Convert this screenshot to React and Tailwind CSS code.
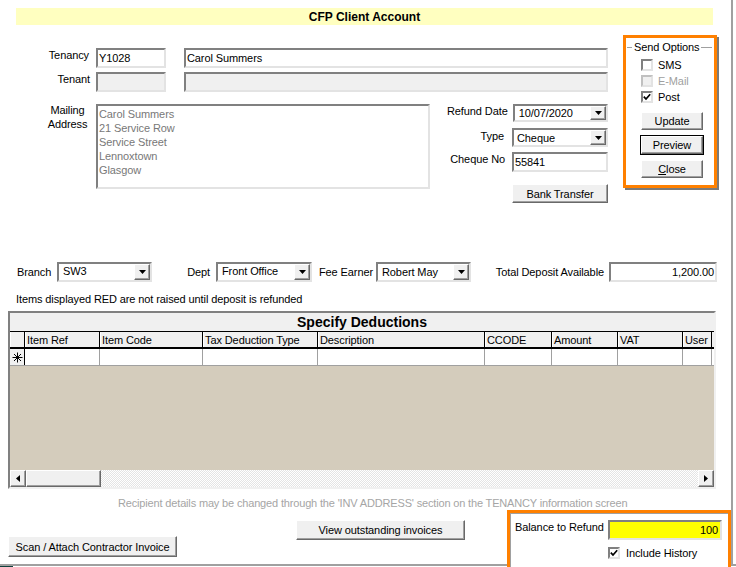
import React from "react";

const sunken =
  "border-2 border-t-[#808080] border-l-[#808080] border-r-[#e3e3e3] border-b-[#e3e3e3]";
const raised =
  "border border-t-white border-l-white border-r-[#696969] border-b-[#696969] shadow-[inset_-1px_-1px_0_#a0a0a0] bg-[#f0f0f0]";

function Field({ w, h = "h-[20px]", value = "", bg = "bg-white", right, className = "" }) {
  return (
    <div
      className={`${sunken} ${w} ${h} ${bg} flex items-center px-[1px] whitespace-nowrap ${
        right ? "justify-end" : ""
      } ${className}`}
    >
      {value}
    </div>
  );
}

function Arrow({ dir = "down" }) {
  if (dir === "left")
    return (
      <svg width="4" height="7" viewBox="0 0 4 7">
        <path d="M4 0 L0 3.5 L4 7 Z" fill="black" />
      </svg>
    );
  if (dir === "right")
    return (
      <svg width="4" height="7" viewBox="0 0 4 7">
        <path d="M0 0 L4 3.5 L0 7 Z" fill="black" />
      </svg>
    );
  return (
    <svg width="7" height="4" viewBox="0 0 7 4">
      <path d="M0 0 L7 0 L3.5 4 Z" fill="black" />
    </svg>
  );
}

function Combo({ w, h = "h-[20px]", value, pad = "pl-[3px]" }) {
  return (
    <div className={`${sunken} ${w} ${h} bg-white flex items-stretch`}>
      <div className={`flex-1 flex items-center ${pad} whitespace-nowrap`}>{value}</div>
      <div className={`${raised} w-[16px] flex items-center justify-center`}>
        <Arrow />
      </div>
    </div>
  );
}

function Btn({ w, h = "h-[18px]", children, strong, className = "" }) {
  return (
    <div
      className={`${w} ${h} ${raised} ${strong ? "outline outline-1 outline-black" : ""} flex items-center justify-center whitespace-nowrap ${className}`}
    >
      {children}
    </div>
  );
}

function Check({ checked, disabled }) {
  return (
    <div
      className={`w-[12px] h-[12px] ${sunken} ${disabled ? "bg-[#f0f0f0] border-t-[#c0c0c0] border-l-[#c0c0c0]" : "bg-white"} flex items-center justify-center`}
    >
      {checked && (
        <svg width="8" height="8" viewBox="0 0 8 8">
          <path d="M0.8 3.6 L3 6 L7.2 1.2" stroke="black" strokeWidth="1.7" fill="none" />
        </svg>
      )}
    </div>
  );
}

const columns = [
  { w: "w-[15px]", label: "" },
  { w: "w-[75px]", label: "Item Ref" },
  { w: "w-[103px]", label: "Item Code" },
  { w: "w-[115px]", label: "Tax Deduction Type" },
  { w: "w-[167px]", label: "Description" },
  { w: "w-[67px]", label: "CCODE" },
  { w: "w-[66px]", label: "Amount" },
  { w: "w-[65px]", label: "VAT" },
  { w: "w-[29px]", label: "User" },
];

const address = ["Carol Summers", "21 Service Row", "Service Street", "Lennoxtown", "Glasgow"];

export default function App() {
  return (
    <div className="w-[736px] h-[567px] overflow-hidden bg-white text-black text-[11px] tracking-[-0.1px] font-['Liberation_Sans',Arial,sans-serif] leading-[14px] flex flex-col">
      <div className="flex h-[564px] shrink-0">
        {/* main window */}
        <div className="w-[733px] border-r-2 border-[#a0a0a0] flex flex-col [&>*]:shrink-0">
          <div className="mt-[8px] ml-[16px] w-[697px] h-[17px] bg-[#ffffc0] flex items-center justify-center font-bold text-[12px] tracking-normal">
            CFP Client Account
          </div>

          {/* top section */}
          <div className="flex">
            <div className="w-[623px] flex flex-col">
              <div className="mt-[23px] flex items-center h-[20px]">
                <div className="w-[89px] text-right -mt-[6px]">Tenancy</div>
                <Field w="w-[70px]" value="Y1028" className="ml-[7px]" />
                <Field w="w-[424px]" value="Carol Summers" className="ml-[18px]" />
              </div>
              <div className="mt-[4px] flex items-center h-[20px]">
                <div className="w-[90px] text-right -mt-[6px]">Tenant</div>
                <Field w="w-[70px]" bg="bg-[#f0f0f0]" className="ml-[6px]" />
                <Field w="w-[424px]" bg="bg-[#f0f0f0]" className="ml-[18px]" />
              </div>
              <div className="mt-[12px] flex items-start">
                <div className="w-[46px]" />
                <div className="w-[43px] text-center -mt-[1px]">
                  Mailing
                  <br />
                  Address
                </div>
                <div className={`${sunken} ml-[7px] w-[334px] h-[85px] bg-white text-[#787878] pl-[1px] pt-[1px]`}>
                  {address.map((line) => (
                    <div key={line}>{line}</div>
                  ))}
                </div>
                <div className="ml-[17px] w-[161px] flex flex-col">
                  <div className="flex items-center h-[18px]">
                    <div className="flex-1 text-right pr-[5px] -mt-[4px] whitespace-nowrap">Refund Date</div>
                    <Combo w="w-[96px]" h="h-[18px]" value="10/07/2020" pad="pl-[4px]" />
                  </div>
                  <div className="mt-[6px] flex items-center h-[19px]">
                    <div className="flex-1 text-right pr-[8px] -mt-[4px]">Type</div>
                    <Combo w="w-[96px]" h="h-[19px]" value="Cheque" />
                  </div>
                  <div className="mt-[5px] flex items-center h-[20px]">
                    <div className="flex-1 text-right pr-[7px] -mt-[6px] whitespace-nowrap">Cheque No</div>
                    <Field w="w-[96px]" value="55841" />
                  </div>
                  <Btn w="w-[96px]" h="h-[19px]" className="mt-[12px] self-end">
                    Bank Transfer
                  </Btn>
                </div>
              </div>
            </div>

            {/* send options */}
            <div className="mt-[10px] w-[94px] h-[153px] border-[3px] border-[#ff8000] shadow-[2px_2px_0_#7a7a7a] flex flex-col">
              <div className="mt-[3px] h-[12px] flex items-center">
                <div className="w-[5px] ml-[1px] h-px bg-[#a0a0a0]" />
                <div className="px-[2px]">Send Options</div>
                <div className="flex-1 h-px bg-[#a0a0a0] mr-[2px]" />
              </div>
              <div className="mt-[6px] pl-[15px] flex flex-col gap-[4px]">
                <div className="flex items-center h-[12px]">
                  <Check />
                  <span className="ml-[5px]">SMS</span>
                </div>
                <div className="flex items-center h-[12px]">
                  <Check disabled />
                  <span className="ml-[5px] text-[#a0a0a0]">E-Mail</span>
                </div>
                <div className="flex items-center h-[12px]">
                  <Check checked />
                  <span className="ml-[5px]">Post</span>
                </div>
              </div>
              <div className="mt-[9px] pl-[15px] flex flex-col gap-[6px]">
                <Btn w="w-[62px]">Update</Btn>
                <Btn w="w-[62px]" strong>
                  Preview
                </Btn>
                <Btn w="w-[62px]">
                  <span className="underline">C</span>lose
                </Btn>
              </div>
            </div>
          </div>

          {/* branch row */}
          <div className="mt-[59px] flex items-center h-[20px]">
            <div className="w-[57px] pl-[17px]">Branch</div>
            <Combo w="w-[95px]" value="SW3" pad="pl-[4px] -mt-[3px]" />
            <div className="w-[64px] text-right pr-[6px]">Dept</div>
            <Combo w="w-[96px]" value="Front Office" pad="pl-[4px] -mt-[3px]" />
            <div className="w-[64px] text-right pr-[3px]">Fee Earner</div>
            <Combo w="w-[95px]" value="Robert May" pad="pl-[4px] -mt-[1px]" />
            <div className="w-[138px] text-right pr-[5px]">Total Deposit Available</div>
            <Field w="w-[108px]" value="1,200.00" right />
          </div>

          <div className="mt-[10px] pl-[16px]">Items displayed RED are not raised until deposit is refunded</div>

          {/* grid */}
          <div className="ml-[8px] mt-[5px] w-[708px] h-[178px] border-2 border-t-[#808080] border-l-[#808080] border-r-[#f0f0f0] border-b-[#f0f0f0] flex flex-col">
            <div className="h-[19px] bg-[#f0f0f0] border-b border-black flex items-center justify-center font-bold text-[14px] tracking-normal">
              Specify Deductions
            </div>
            <div className="h-[17px] flex border-b-2 border-black bg-[#f0f0f0]">
              {columns.map((c, i) => (
                <div
                  key={i}
                  className={`${c.w} border-r border-black border-l border-l-white pl-[1px] flex items-center whitespace-nowrap overflow-hidden`}
                >
                  {c.label}
                </div>
              ))}
            </div>
            <div className="h-[17px] flex bg-white border-b border-[#a0a0a0]">
              {columns.map((c, i) =>
                i === 0 ? (
                  <div key={i} className={`${c.w} bg-[#f0f0f0] border-r border-black flex items-center justify-center`}>
                    <svg width="11" height="11" viewBox="0 0 11 11">
                      <path d="M5.5 0.5 V10.5 M0.5 5.5 H10.5 M2 2 L9 9 M9 2 L2 9" stroke="black" strokeWidth="1" />
                    </svg>
                  </div>
                ) : (
                  <div key={i} className={`${c.w} border-r border-[#a0a0a0]`} />
                ),
              )}
            </div>
            <div className="flex-1 bg-[#d4ccbc]" />
            <div className="h-[17px] flex bg-[repeating-conic-gradient(#e4e4e4_0_25%,#ffffff_0_50%)] bg-[length:2px_2px]">
              <div className={`w-[16px] ${raised} flex items-center justify-center`}>
                <Arrow dir="left" />
              </div>
              <div className={`w-[75px] ${raised}`} />
              <div className="flex-1" />
              <div className={`w-[16px] ${raised} flex items-center justify-center`}>
                <Arrow dir="right" />
              </div>
            </div>
          </div>

          <div className="mt-[7px] pl-[118px] whitespace-nowrap text-[#a5a5a5] tracking-[-0.16px]">
            Recipient details may be changed through the 'INV ADDRESS' section on the TENANCY information screen
          </div>

          {/* bottom area */}
          <div className="flex">
            <div className="pt-[26px] pl-[8px]">
              <Btn w="w-[169px]" h="h-[21px]">
                Scan / Attach Contractor Invoice
              </Btn>
            </div>
            <div className="pt-[10px] ml-[119px]">
              <Btn w="w-[169px]" h="h-[20px]">
                View outstanding invoices
              </Btn>
            </div>
            <div className="relative z-10 ml-[42px] w-[224px] h-[62px] border-[3px] border-[#ff8000] bg-white">
              <div className="h-full border-l border-t border-[#a0a0a0] flex flex-col">
                <div className="mt-[6px] flex items-start">
                  <div className="w-[97px] pl-[4px]">Balance to Refund</div>
                  <Field w="w-[114px]" value="100" right bg="bg-[#ffff00]" className="pr-[2px]" />
                </div>
                <div className="mt-[6px] pl-[97px] flex items-center">
                  <Check checked />
                  <span className="ml-[6px]">Include History</span>
                </div>
              </div>
            </div>
          </div>
        </div>
        <div className="flex-1 bg-white" />
      </div>
      <div className="h-[3px] shrink-0 flex border-t-2 border-[#a0a0a0]">
        <div className="w-[13px] bg-[#10403c]" />
      </div>
    </div>
  );
}
